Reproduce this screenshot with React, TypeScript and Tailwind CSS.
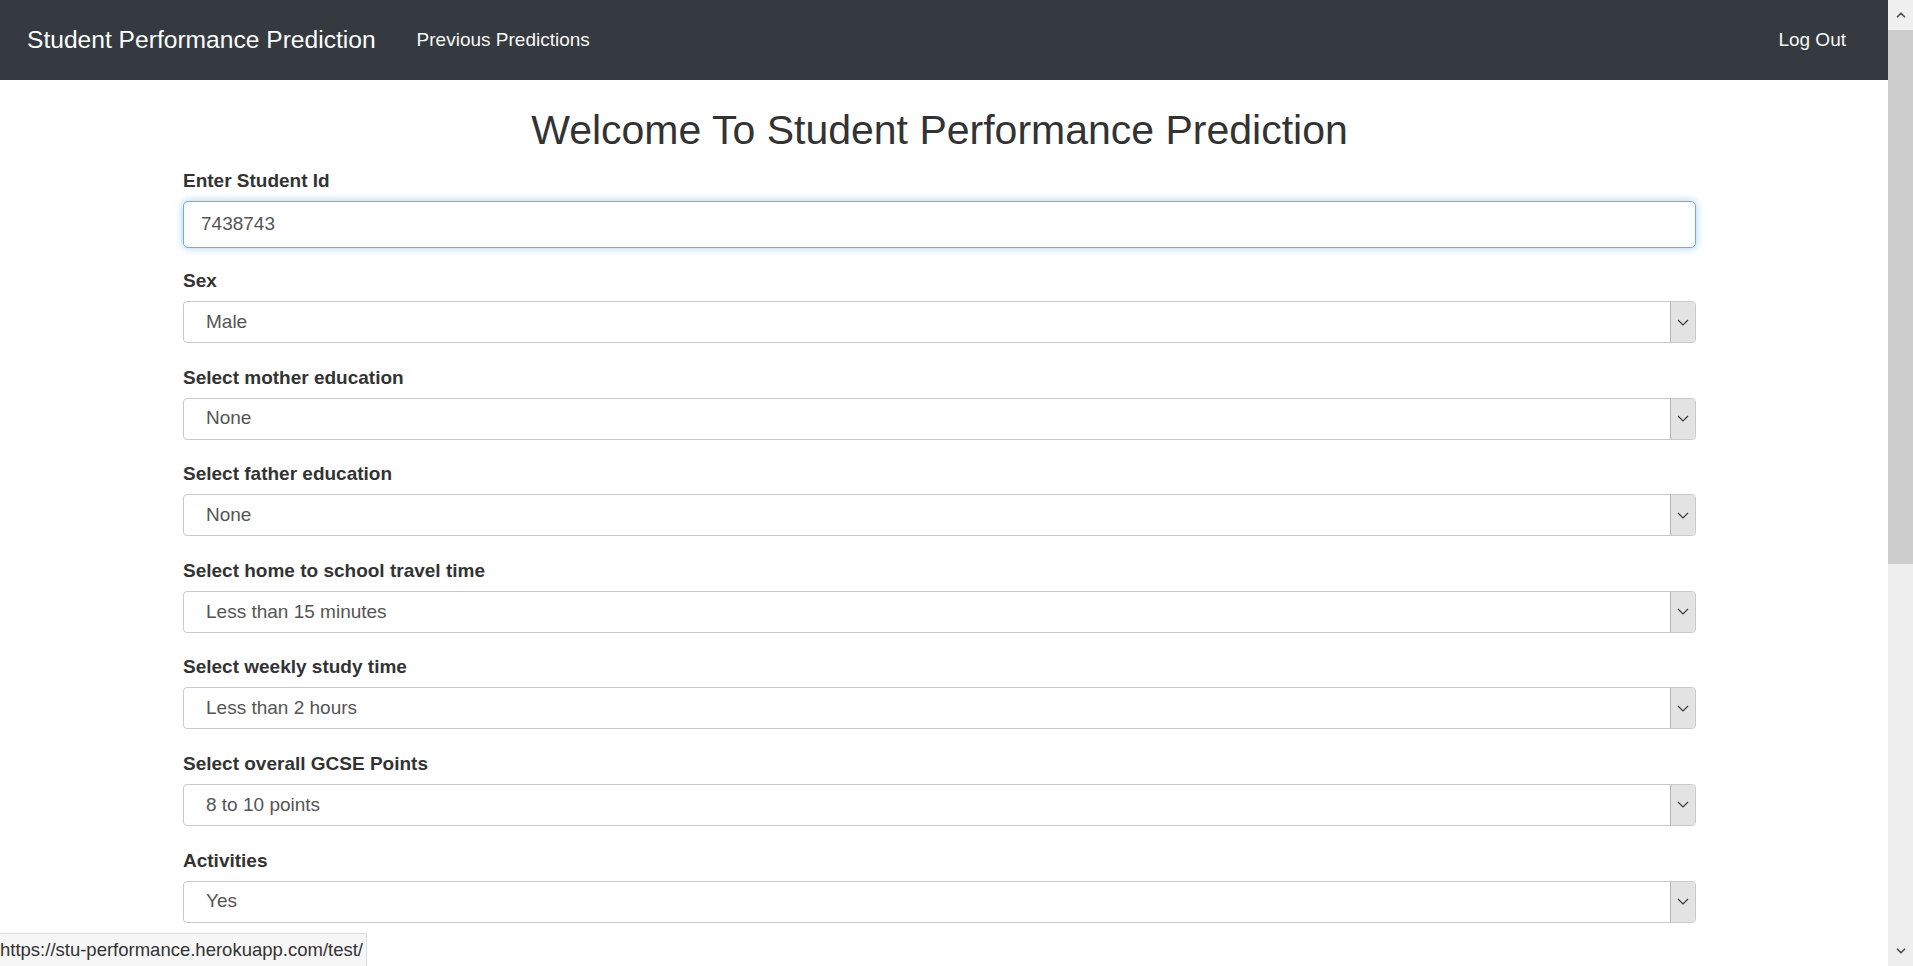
import { ChevronDown, ChevronUp } from "lucide-react"

const fields = [
  { label: "Sex", value: "Male" },
  { label: "Select mother education", value: "None" },
  { label: "Select father education", value: "None" },
  { label: "Select home to school travel time", value: "Less than 15 minutes" },
  { label: "Select weekly study time", value: "Less than 2 hours" },
  { label: "Select overall GCSE Points", value: "8 to 10 points" },
  { label: "Activities", value: "Yes" },
]

function SelectBox({ value }: { value: string }) {
  return (
    <div className="flex h-[42px] w-full items-stretch rounded-[4px] border border-[#c9c9c9] bg-white">
      <span className="flex flex-1 items-center pl-[22px] text-[19px] text-[#555]">{value}</span>
      <div className="flex w-[25px] items-center justify-center rounded-r-[3px] border-l border-[#b5b5b5] bg-[#e3e3e3]">
        <svg width="12" height="7" viewBox="0 0 12 7" fill="none">
          <path d="M1 1 L6 6 L11 1" stroke="#3a3a3a" strokeWidth="1.2" />
        </svg>
      </div>
    </div>
  )
}

export default function App() {
  return (
    <div className="relative flex h-[966px] w-full overflow-hidden bg-white" style={{ fontFamily: '"Liberation Sans", Arial, sans-serif' }}>
      <div className="flex flex-1 flex-col">
        <nav className="flex h-[80px] items-center bg-[#343a40] pl-[27px] pr-[42px]">
          <a href="#" className="text-[24.6px] text-white">Student Performance Prediction</a>
          <a href="#" className="ml-[41px] text-[19px] text-[#f7f7f7]">Previous Predictions</a>
          <a href="#" className="ml-auto text-[19px] text-[#f7f7f7]">Log Out</a>
        </nav>

        <main className="ml-[183px] w-[1513px]">
          <h1 className="mt-[26px] text-center text-[41px] leading-[48px] text-[#333]">
            Welcome To Student Performance Prediction
          </h1>

          <div className="mt-[12px] mb-[18px]">
            <label className="mb-[6px] block text-[19px] font-bold leading-[29px] text-[#333]">Enter Student Id</label>
            <div className="flex h-[47px] items-center rounded-[5px] border border-[#66afe9] bg-white pl-[17px] text-[19px] text-[#555] shadow-[0_0_8px_rgba(102,175,233,0.6)]">
              7438743
            </div>
          </div>

          {fields.map((f) => (
            <div key={f.label} className="mb-[19.6px]">
              <label className="mb-[6px] block text-[19px] font-bold leading-[29px] text-[#333]">{f.label}</label>
              <SelectBox value={f.value} />
            </div>
          ))}
        </main>
      </div>

      <div className="flex w-[25px] flex-col bg-[#eeeeee]">
        <div className="flex h-[30px] items-center justify-center bg-[#f0f0f0]">
          <ChevronUp size={14} strokeWidth={3} className="text-[#505050]" />
        </div>
        <div className="h-[534px] bg-[#cdcdcd]" />
        <div className="flex-1" />
        <div className="flex h-[30px] items-center justify-center">
          <ChevronDown size={14} strokeWidth={3} className="text-[#505050]" />
        </div>
      </div>

      <div className="absolute bottom-0 left-0 flex h-[33px] w-[367px] items-center border-t border-r border-[#dcdcdc] bg-[#f6f6f6] text-[18.5px] text-[#333]">
        https://stu-performance.herokuapp.com/test/
      </div>
    </div>
  )
}
